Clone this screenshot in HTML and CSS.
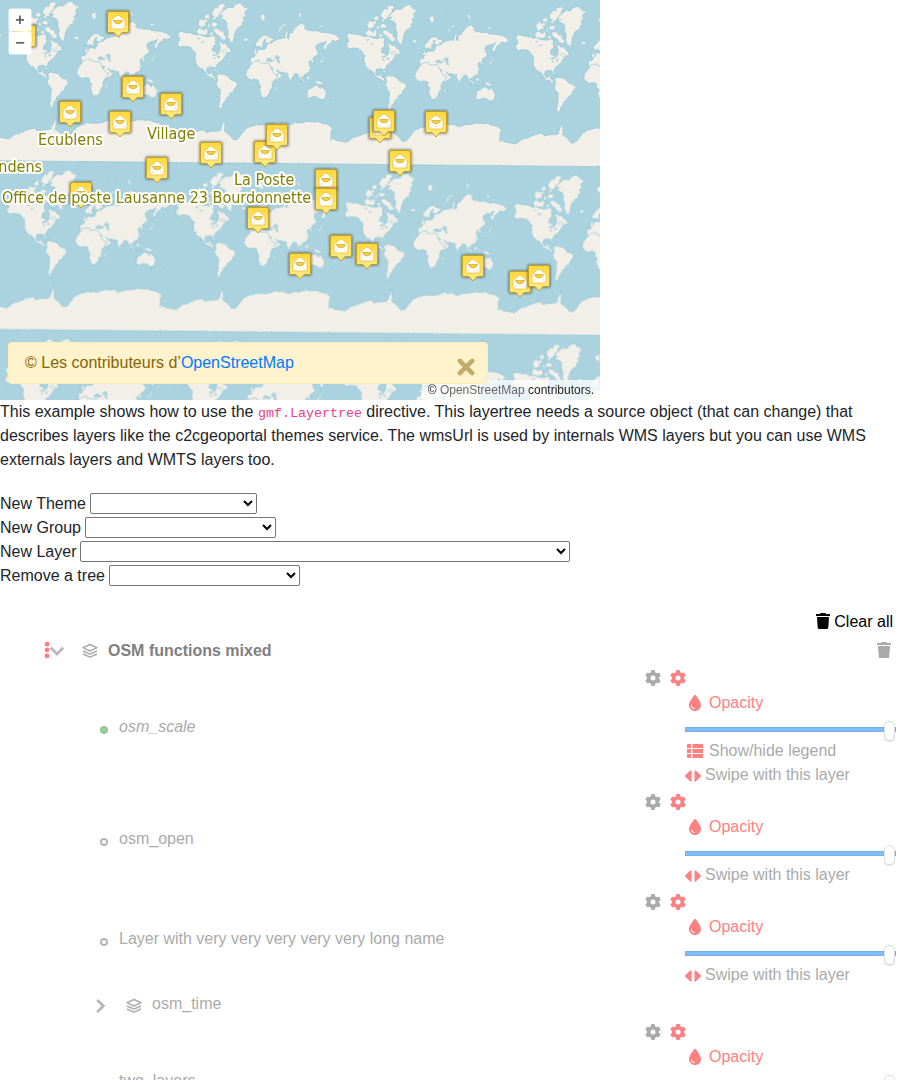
FILE: index.html
```html
<!DOCTYPE html>
<html lang="en">
<head>
<meta charset="utf-8">
<title>Layer tree example</title>
<link rel="stylesheet" href="styles.css">
</head>
<body>
<svg class="sprite" aria-hidden="true">
  <symbol id="gear" viewBox="0 0 512 512"><path d="M495.9 166.6c3.2 8.7 .5 18.4-6.4 24.6l-43.3 39.4c1.1 8.3 1.7 16.8 1.7 25.4s-.6 17.1-1.7 25.4l43.3 39.4c6.9 6.2 9.6 15.9 6.4 24.6c-4.4 11.9-9.7 23.3-15.8 34.3l-4.7 8.1c-6.6 11-14 21.4-22.1 31.2c-5.9 7.2-15.7 9.6-24.5 6.8l-55.7-17.7c-13.4 10.3-28.2 18.9-44 25.4l-12.5 57.1c-2 9.1-9 16.3-18.2 17.8c-13.8 2.3-28 3.5-42.5 3.5s-28.7-1.2-42.5-3.5c-9.2-1.5-16.2-8.7-18.2-17.8l-12.5-57.1c-15.8-6.5-30.6-15.1-44-25.4L83.1 425.9c-8.8 2.8-18.6 .3-24.5-6.8c-8.1-9.8-15.5-20.2-22.1-31.2l-4.7-8.1c-6.1-11-11.4-22.4-15.8-34.3c-3.2-8.7-.5-18.4 6.4-24.6l43.3-39.4C64.6 273.1 64 264.6 64 256s.6-17.1 1.7-25.4L22.4 191.2c-6.9-6.2-9.6-15.9-6.4-24.6c4.4-11.9 9.7-23.3 15.8-34.3l4.7-8.1c6.6-11 14-21.4 22.1-31.2c5.9-7.2 15.7-9.6 24.5-6.8l55.7 17.7c13.4-10.3 28.2-18.9 44-25.4l12.5-57.1c2-9.1 9-16.3 18.2-17.8C227.3 1.2 241.5 0 256 0s28.7 1.2 42.5 3.5c9.2 1.5 16.2 8.7 18.2 17.8l12.5 57.1c15.8 6.5 30.6 15.1 44 25.4l55.7-17.7c8.8-2.8 18.6-.3 24.5 6.8c8.1 9.8 15.5 20.2 22.1 31.2l4.7 8.1c6.1 11 11.4 22.4 15.8 34.3zM256 336a80 80 0 1 0 0-160 80 80 0 1 0 0 160z"/></symbol>
  <symbol id="drop" viewBox="-64 0 512 512"><path d="M192 512C86 512 0 426 0 320C0 228.8 130.2 57.7 166.6 11.7C172.6 4.2 181.5 0 191.1 0h1.8c9.6 0 18.5 4.2 24.5 11.7C253.8 57.7 384 228.8 384 320c0 106-86 192-192 192zM96 336c0-8.8-7.2-16-16-16s-16 7.2-16 16c0 61.9 50.1 112 112 112c8.8 0 16-7.2 16-16s-7.2-16-16-16c-44.2 0-80-35.8-80-80z"/></symbol>
  <symbol id="trash" viewBox="0 0 14 16"><path d="M.5 1H4l.6-1h4.800L10 1h3.500q.5 0 .5.500V3H0V1.500Q0 1 .5 1zM1 4h12l-.7 10.500q-.1 1.500-1.600 1.500H3.300q-1.500 0-1.600-1.500z"/></symbol>
  <symbol id="list" viewBox="0 0 16 16"><path d="M1 1h3v4H0V2q0-1 1-1zM5.500 1H15q1 0 1 1v3H5.500zM0 6h4v4H0zM5.500 6H16v4H5.500zM0 11h4v4H1q-1 0-1-1zM5.500 11H16v3q0 1-1 1H5.500z"/></symbol>
  <symbol id="swipe" viewBox="0 0 16 16"><path d="M6.500 3v10q-.5 1-1.300.4L.4 8.800Q-.2 8 .4 7.200L5.200 2.600Q6 2 6.500 3zM9.500 3v10q.5 1 1.300.4l4.800-4.600q.6-.8 0-1.600l-4.800-4.600Q10 2 9.500 3z"/></symbol>
  <symbol id="layers" viewBox="0 0 16 16"><path class="line" d="M8 1.500l7 3.200-7 3.300-7-3.300zM1 8l7 3.200L15 8M1 11l7 3.200 7-3.200"/></symbol>
  <symbol id="down" viewBox="0 0 16 16"><path class="chev" d="M1.800 4.800L8 11l6.200-6.200"/></symbol>
  <symbol id="right" viewBox="0 0 16 16"><path class="chev" d="M5.200 2L11.400 8l-6.200 6"/></symbol>
  <symbol id="grip" viewBox="0 0 6 16"><circle cx="3" cy="2.200" r="2.400"/><circle cx="3" cy="8" r="2.400"/><circle cx="3" cy="13.800" r="2.400"/></symbol>
  <symbol id="cross" viewBox="0 0 16 16"><path class="cross-line" d="M2.500 2.500l11 11M13.500 2.500l-11 11"/></symbol>
</svg>

<section class="map">
  <svg class="map-canvas" viewBox="0 0 600 400" role="img" aria-label="World map with post offices">
    <defs>
      <linearGradient id="pinfill" x1="0" y1="0" x2="0" y2="1"><stop offset="0" stop-color="#ffd83d"/><stop offset="1" stop-color="#ffec8a"/></linearGradient>
      <filter id="coast" x="0" y="0" width="1800" height="1200" filterUnits="userSpaceOnUse">
        <feTurbulence type="fractalNoise" baseFrequency="0.12" numOctaves="2" seed="4" result="n"/>
        <feDisplacementMap in="SourceGraphic" in2="n" scale="6" xChannelSelector="R" yChannelSelector="G"/>
      </filter>
      <filter id="soft" x="-30%" y="-30%" width="160%" height="160%"><feGaussianBlur stdDeviation="1"/></filter>
      <g id="world">
        <path d="M93 413L108 421 125 424 140 427 150 420 160 412 175 409 190 402 205 397 220 394 226 403 240 399 256 399 268 396 272 382 280 362 282 380 281 399 295 409 307 424 319 423 328 412 343 392 360 384 380 379 410 380 425 376 440 370 448 375 460 372 475 380 495 374 515 373 530 369 550 371 562 370 575 376 590 378 605 390 600 400 600 419V497L93 492z"/>
        <path class="seam" d="M84 422L100 420V489H84z"/>
        <path d="M140 105l9-6 16 4 15 1 13 6 12-2 14 6 15 2 12-5 8 6-2 11 3 10-8 6-3 13 9 3 7 8 5-7 3-15-5-12 6-4 9 8 3-6 9 13 8 5 3 12-10 1-8 9-4 7-7 9-7 4-6 6-3 9-3 2 3 12-5-5-3-9-9-1-10 2-2 11 4 8 8-1 4-5 4 1-3 9 8 2 1 9 6 3-6 2-8-8-17-7-7-12-9-11 2 11-8-12-8-8-5-11-1-15 3-8-9-9-7-10-15-3-12 1-9 9 4-9-9-5 4-5-4-6 9-3z"/>
        <path d="M257 232l9-6 10 2 12 3 8 9 4 5 11 3 8 6-1 8-8 9-3 10-9 4-5 9-8 7-3 9-6 5-2 9-4 6 4 8-8-5-3-12 3-13 1-16 1-17-10-12-3-9 5-7z"/>
        <path d="M277 37l13-10 15 1 9-11 16-4 5 10 10-5-5 10 15-2-8 8-6 8 3 9-8 8 5 9-8 5 1 8-13 8-5 6-5 12-3 16-3 13-9-8-7-13 3-15-5-12 1-11-4-10-12-5-7-4 11-5-12-2z"/>
        <path d="M358 190l1-13 10-1 3-3-3-8 8-5 9-8-2-8 5 2-1 8 13-1 5-7 0-8 10-3-9 0-5-4 3-10-4 3-6 11 1 9-6 7-5-7-9 3-3-11 11-13 10-11 13-2 7 7 13 3 1 8-10 1 2 7 9-8 8-5 12-2 8-3 4 3 1-13 7-11 3 5-4 13 4 8 3-8-1-10 9-3 9-12 7-9 14-7 11 10-4 5 9 7 3-2 14 4 14-1 9 5 18 1 12 2 14 4 12 10 4 5-10 2-6 4-7-5-5 8-10 6-5 12-7 7-3-11 7-12 4-7-12 6-9 1-11 7 1 11 6 10-3 7-9 5-5 7 5 9-6 4-5-10-5 6 2 11 4 9-6 11-12 6-4 3 3 10-9-7-2 10 3 12-8-14-4-14-8-3-10 14-3 13-9-16-1-12-6 1-10-4-8 1-9-7 7 9 5 4 7 1-8 9-12 7-5 0-12-27 8-8-11-1-8 3-4-8-6 4-9-5-9 10-7 6z"/>
        <path d="M365 192l9-4 11-1 3 6 9 2 11-1 6 2 5 11 7 13 7 8 7 1-3 9-10 11-4 10 1 9-7 8-3 12-9 9-11 2-4-11-4-13 3-12-6-7-1-11-10-2-11 3-11-7-6-10 3-13z"/>
        <path d="M530 274l12-5 7-6 8-3 9 9 3 1 3-10 5 8 5 8 4 6-2 13-6 7-8 2-8-6-10-4-10 3-12 4-2-11zM571 308l4 1-3 5zM434 265l5 0-3 11-5 3 0-9zM368 168l0-8 4-4-6-8 8 2 2 7 4 6-5 3zM362 159l5-1-1 6-5 1z"/>
        <path class="thin" d="M244 214l10-2 12 7-9-1zM266 219l9 1-4 4zM336 122l8-3 8 3-3 6-9 1zM271 158l10 6 11 1-8-11z"/>
        <path class="thin" d="M505 237l10 4 10 12-6-1zM526 239l6-6 6 5-5 8zM540 242l7-3-4 12zM549 247l13 0 11 5 4 7-12-1-8-5zM526 256l14 2-3 1zM533 211l4 4-1 6zM565 189l8-3 2-6 3-12 3 5-4 15-8 6zM578 154l3 9-2 4zM614 298l6-4-1 5-6 4zM604 311l8-6-5 8-5 4z"/>
        <path class="thin" d="M242 43l11-17 9 2 0-9 15-4 7 8-8 6 1 7-9 8-6 11-8 4-2 8-8-5 6-8-7-2zM222 51l10-5 5 10-7 6-10-3zM201 71l9-10 9 5 7-6 4 9-8 5 5 8-10 0-7 7-7-8zM197 98l8-10 14 8 10-8 2 16-8 7-10-2-12-1zM232 74l6 8-2 9-7-6zM239 75l11-4 12 6-9 8-11-2zM249 91l10-1 11 9 9 3 0 9 8 4-4 10-10-1-8-11-9-6-8-8zM239 100l9 5-5 8-7-5z"/>
        <path class="thin" d="M387 54l8-7 11 3-5 4 2 9-8 6-4-7zM437 45l10-3-3 4zM452 42l11-1-5 5zM500 40l9 6 7 15-8-4-5-8zM442 105l2-14 8-10 15-9-3 7-12 8-4 12zM561 80l12 1 8 4-13 2z"/>
        <path class="lake" d="M430 178l9-7 6 5-1 11 3 8-6-2-4-11zM405 187l6-7 9 0 3 4 9 0-9 6-12-1zM244 170l9-3 6 3-8 2zM250 175l3 7-4-1zM260 174l8 0-4 6zM199 120l9-2-4 4zM210 131l11-2-7 4z"/>
      </g>
      <g id="pin">
        <rect x="-12" y="-1" width="24" height="24" rx="3" fill="#555" opacity=".6" filter="url(#soft)"/>
        <path d="M-9 .5H9Q10.500.5 10.500 2V20Q10.500 21.500 9 21.500H4L0 26l-4-4.500H-9Q-10.500 21.500-10.500 20V2Q-10.500.5-9 .5z" fill="url(#pinfill)" stroke="#c4a021"/>
        <path d="M-7 18V9.500L-1.500 4.800Q0 3.800 1.500 4.800L7 9.500V18z" fill="#fff" stroke="#eac23a" stroke-width=".8"/>
        <path d="M-4.500 9.500H4.500L3.500 11.500Q0 14.500-3.500 11.500z" fill="#f3d04a" stroke="#d7ae25" stroke-width=".8"/>
        <path d="M-6 17l3-3M6 17l-3-3" stroke="#ead28a" stroke-width=".6"/>
      </g>
    </defs>
    <rect width="600" height="400" fill="#aad3df"/>
    <g transform="scale(.333333)" >
      <g class="land" filter="url(#coast)">
        <use href="#world" x="-621" y="-15"/><use href="#world" x="-114" y="-10"/><use href="#world" x="393" y="-5"/><use href="#world" x="900" y="0"/><use href="#world" x="1407" y="5"/>
        <use href="#world" x="-626" y="491"/><use href="#world" x="-119" y="496"/><use href="#world" x="388" y="501"/><use href="#world" x="895" y="506"/><use href="#world" x="1402" y="511"/>
        <use href="#world" x="-631" y="997"/><use href="#world" x="-124" y="1002"/><use href="#world" x="383" y="1007"/><use href="#world" x="890" y="1012"/><use href="#world" x="1397" y="1017"/>
      </g>
    </g>
    <g>
      <use href="#pin" x="25" y="25"/><use href="#pin" x="118" y="11"/><use href="#pin" x="133" y="76"/><use href="#pin" x="171" y="93"/><use href="#pin" x="70" y="101"/><use href="#pin" x="120" y="111"/>
      <use href="#pin" x="211" y="142"/><use href="#pin" x="265" y="141"/><use href="#pin" x="277" y="124"/><use href="#pin" x="157" y="157"/><use href="#pin" x="81" y="182"/>
      <use href="#pin" x="326" y="169"/><use href="#pin" x="326" y="188"/><use href="#pin" x="380" y="117"/><use href="#pin" x="384" y="110"/><use href="#pin" x="436" y="111"/><use href="#pin" x="400" y="150"/>
      <use href="#pin" x="258" y="207"/><use href="#pin" x="300" y="253"/><use href="#pin" x="341" y="235"/><use href="#pin" x="367" y="243"/><use href="#pin" x="473" y="255"/><use href="#pin" x="520" y="271"/><use href="#pin" x="539" y="265"/>
    </g>
    <g class="map-labels">
      <text x="38" y="145">Ecublens</text>
      <text x="147" y="139">Village</text>
      <text x="42" y="172" text-anchor="end">ndens</text>
      <text x="234" y="185">La Poste</text>
      <text x="2" y="203">Office de poste Lausanne 23 Bourdonnette</text>
    </g>
  </svg>
  <div class="zoom-control">
    <button type="button" aria-label="Zoom in">+</button>
    <button type="button" aria-label="Zoom out">−</button>
  </div>
  <div class="attribution">© <a href="#">OpenStreetMap</a> contributors.</div>
  <div class="alert" role="alert">
    <span>© Les contributeurs d’<a href="#">OpenStreetMap</a></span>
    <button type="button" class="close" aria-label="Close"><svg><use href="#cross"/></svg></button>
  </div>
</section>

<p class="intro">This example shows how to use the <code>gmf.Layertree</code> directive. This layertree needs a source object (that can change) that describes layers like the c2cgeoportal themes service. The wmsUrl is used by internals WMS layers but you can use WMS externals layers and WMTS layers too.</p>

<form class="pickers">
  <div class="picker"><label for="theme">New Theme</label><select id="theme" class="theme"><option></option></select></div>
  <div class="picker"><label for="group">New Group</label><select id="group" class="group"><option></option></select></div>
  <div class="picker"><label for="layer">New Layer</label><select id="layer" class="layer-select"><option></option></select></div>
  <div class="picker"><label for="tree">Remove a tree</label><select id="tree" class="group"><option></option></select></div>
</form>

<main class="tree">
  <div class="tree-actions"><button type="button" class="clear"><svg class="icon bin"><use href="#trash"/></svg>Clear all</button></div>

  <div class="group-row">
    <svg class="grip"><use href="#grip"/></svg>
    <button type="button" class="toggle" aria-label="Collapse group"><svg class="icon"><use href="#down"/></svg></button>
    <svg class="icon stack"><use href="#layers"/></svg>
    <button type="button" class="group-name">OSM functions mixed</button>
    <button type="button" class="remove" aria-label="Remove group"><svg class="icon bin"><use href="#trash"/></svg></button>
  </div>

  <ul class="layers">
    <li class="layer">
      <span class="bullet on"></span><button type="button" class="name out">osm_scale</button>
      <div class="controls">
        <div class="gears"><button type="button" aria-label="Metadata"><svg class="icon"><use href="#gear"/></svg></button><button type="button" class="active" aria-label="Options"><svg class="icon"><use href="#gear"/></svg></button></div>
        <div class="options">
          <label class="opacity" for="o1"><span class="fixed"><svg class="icon"><use href="#drop"/></svg></span>Opacity</label>
          <input type="range" id="o1" min="0" max="1" step="0.01" value="1">
          <button type="button" class="option"><span class="fixed"><svg class="icon"><use href="#list"/></svg></span>Show/hide legend</button>
          <button type="button" class="option"><svg class="icon"><use href="#swipe"/></svg>Swipe with this layer</button>
        </div>
      </div>
    </li>
    <li class="layer">
      <span class="bullet"></span><button type="button" class="name">osm_open</button>
      <div class="controls">
        <div class="gears"><button type="button" aria-label="Metadata"><svg class="icon"><use href="#gear"/></svg></button><button type="button" class="active" aria-label="Options"><svg class="icon"><use href="#gear"/></svg></button></div>
        <div class="options">
          <label class="opacity" for="o2"><span class="fixed"><svg class="icon"><use href="#drop"/></svg></span>Opacity</label>
          <input type="range" id="o2" min="0" max="1" step="0.01" value="1">
          <button type="button" class="option"><svg class="icon"><use href="#swipe"/></svg>Swipe with this layer</button>
        </div>
      </div>
    </li>
    <li class="layer">
      <span class="bullet"></span><button type="button" class="name">Layer with very very very very very long name</button>
      <div class="controls">
        <div class="gears"><button type="button" aria-label="Metadata"><svg class="icon"><use href="#gear"/></svg></button><button type="button" class="active" aria-label="Options"><svg class="icon"><use href="#gear"/></svg></button></div>
        <div class="options">
          <label class="opacity" for="o3"><span class="fixed"><svg class="icon"><use href="#drop"/></svg></span>Opacity</label>
          <input type="range" id="o3" min="0" max="1" step="0.01" value="1">
          <button type="button" class="option"><svg class="icon"><use href="#swipe"/></svg>Swipe with this layer</button>
        </div>
      </div>
    </li>
    <li class="group-row sub">
      <button type="button" class="toggle" aria-label="Expand group"><svg class="icon"><use href="#right"/></svg></button>
      <svg class="icon stack"><use href="#layers"/></svg>
      <button type="button" class="name">osm_time</button>
    </li>
    <li class="layer">
      <span class="bullet"></span><button type="button" class="name">two_layers</button>
      <div class="controls">
        <div class="gears"><button type="button" aria-label="Metadata"><svg class="icon"><use href="#gear"/></svg></button><button type="button" class="active" aria-label="Options"><svg class="icon"><use href="#gear"/></svg></button></div>
        <div class="options">
          <label class="opacity" for="o4"><span class="fixed"><svg class="icon"><use href="#drop"/></svg></span>Opacity</label>
          <input type="range" id="o4" min="0" max="1" step="0.01" value="1">
          <button type="button" class="option"><span class="fixed"><svg class="icon"><use href="#list"/></svg></span>Show/hide legend</button>
          <button type="button" class="option"><svg class="icon"><use href="#swipe"/></svg>Swipe with this layer</button>
        </div>
      </div>
    </li>
  </ul>
</main>
</body>
</html>
```
FILE: styles.css
```css
* { box-sizing: border-box; }
body {
  margin: 0;
  background: #fff;
  color: #212529;
  font: 16px/24px "Liberation Sans", Arial, sans-serif;
}
button {
  padding: 0;
  border: 0;
  background: none;
  color: inherit;
  font: inherit;
  text-align: left;
}
a { color: #007bff; text-decoration: none; }
.sprite { display: none; }
.icon { display: block; flex: none; width: 16px; height: 16px; fill: currentColor; }
.bin { width: 14px; }
.line { fill: none; stroke: currentColor; stroke-width: 1.4; stroke-linejoin: round; }
.chev { fill: none; stroke: #b8b8b8; stroke-width: 2.8; }
.cross-line { stroke: currentColor; stroke-width: 4; stroke-linecap: round; }

.map { position: relative; max-width: 600px; }
.map-canvas { display: block; width: 100%; }
.land { fill: #f2efe9; stroke: #8cc4d2; stroke-width: 2; }
.seam { stroke: none; }
.thin { stroke-width: 1.5; }
.lake { fill: #aad3df; stroke-width: 1; }
.map-labels {
  font: 16px "DejaVu Sans Condensed", "DejaVu Sans", sans-serif;
  font-stretch: condensed;
  fill: #808000;
  stroke: #fff;
  stroke-width: 4px;
  stroke-linejoin: round;
  paint-order: stroke;
}
.zoom-control {
  position: absolute;
  top: 8px;
  left: 8px;
  display: grid;
  gap: 1px;
  padding: 1px;
  border-radius: 4px;
  background: rgba(255, 255, 255, .4);
}
.zoom-control button {
  width: 22px;
  height: 22px;
  border-radius: 2px;
  background: #fff;
  color: #666;
  font-size: 16px;
  font-weight: bold;
  line-height: 22px;
  text-align: center;
}
.attribution {
  position: absolute;
  right: 0;
  bottom: 0;
  padding: 0 6px;
  background: rgba(255, 255, 255, .75);
  color: #222;
  font-size: 12px;
  line-height: 20px;
}
.attribution a { color: #666; }
.alert {
  position: absolute;
  bottom: 16px;
  left: 8px;
  display: flex;
  justify-content: space-between;
  width: 80%;
  padding: 8px 12px 8px 16px;
  border: 1px solid #ffeeba;
  border-radius: 4px;
  background: #fff3cd;
  color: #856404;
}
.close { align-self: end; color: #c2ab66; }
.close svg { display: block; width: 18px; height: 18px; margin-bottom: -1px; }

.intro { margin: 0 0 20px; padding-right: 24px; }
code { color: #e83e8c; font-family: "Liberation Mono", monospace; font-size: smaller; line-height: 1; }
.picker { display: flex; align-items: start; gap: 4px; height: 24px; }
.picker select {
  height: 21px;
  margin: 1px 0 0;
  border: 1px solid #767676;
  border-radius: 2px;
  background-color: #fff;
  font: inherit;
}
.theme { width: 167px; }
.group { width: 191px; }
.layer-select { width: 490px; }

.tree { padding: 22px 4px 0 40px; color: #aaa; }
.tree-actions { display: flex; justify-content: flex-end; padding-right: 3px; }
.clear { display: flex; align-items: center; gap: 4px; color: #000; }
.clear .icon { margin-bottom: 2px; }
.group-row { display: flex; align-items: center; height: 32px; }
.grip { width: 6px; height: 16px; margin-left: 4px; fill: #ff8080; }
.stack { margin: 2px 10px 0 17px; }
.grip + .toggle { margin-left: -1px; }
.group-name { padding-top: 1px; color: #808080; font-weight: bold; }
.remove { margin-left: auto; margin-right: 5px; }
.toggle { margin-top: 2px; }
.layers { margin: 0; padding: 0 0 0 52px; list-style: none; }
.sub { height: 30px; }
.sub .stack { margin-left: 18px; }
.layer { display: flex; align-items: center; }
.bullet {
  width: 8px;
  height: 8px;
  margin: 4px 11px 0 8px;
  border: 2px solid #b4b4b4;
  border-radius: 50%;
}
.bullet.on { border-color: #a3bfa3; background: #7fe67f; }
.name { flex: 1; padding-bottom: 2px; }
.out { font-style: italic; }
.controls { width: 251px; padding-bottom: 3px; }
.gears { display: flex; align-items: center; gap: 9px; height: 24px; }
.active, .opacity, .option .icon { color: #ff8080; }
.options { display: grid; padding-left: 40px; }
.opacity, .option { display: flex; align-items: center; gap: 4px; }
.opacity { padding-top: 1px; }
.opacity .icon { margin-bottom: 1px; }
.option .icon { margin-top: 2px; }
.option .fixed .icon { margin-top: 0; }
.fixed { display: flex; justify-content: center; width: 20px; }
input[type="range"] {
  width: 100%;
  height: 20px;
  margin: 4px 0 0;
  appearance: none;
  background: none;
}
input[type="range"]::-webkit-slider-runnable-track {
  height: 5px;
  border: 1px solid #78b0ea;
  background: #80bdff;
}
input[type="range"]::-webkit-slider-thumb {
  appearance: none;
  width: 11px;
  height: 20px;
  margin-top: -7px;
  border: 1px solid #ddd;
  border-radius: 5px;
  background: #fff;
  box-shadow: 0 1px 1px rgba(0, 0, 0, .12);
}
```
